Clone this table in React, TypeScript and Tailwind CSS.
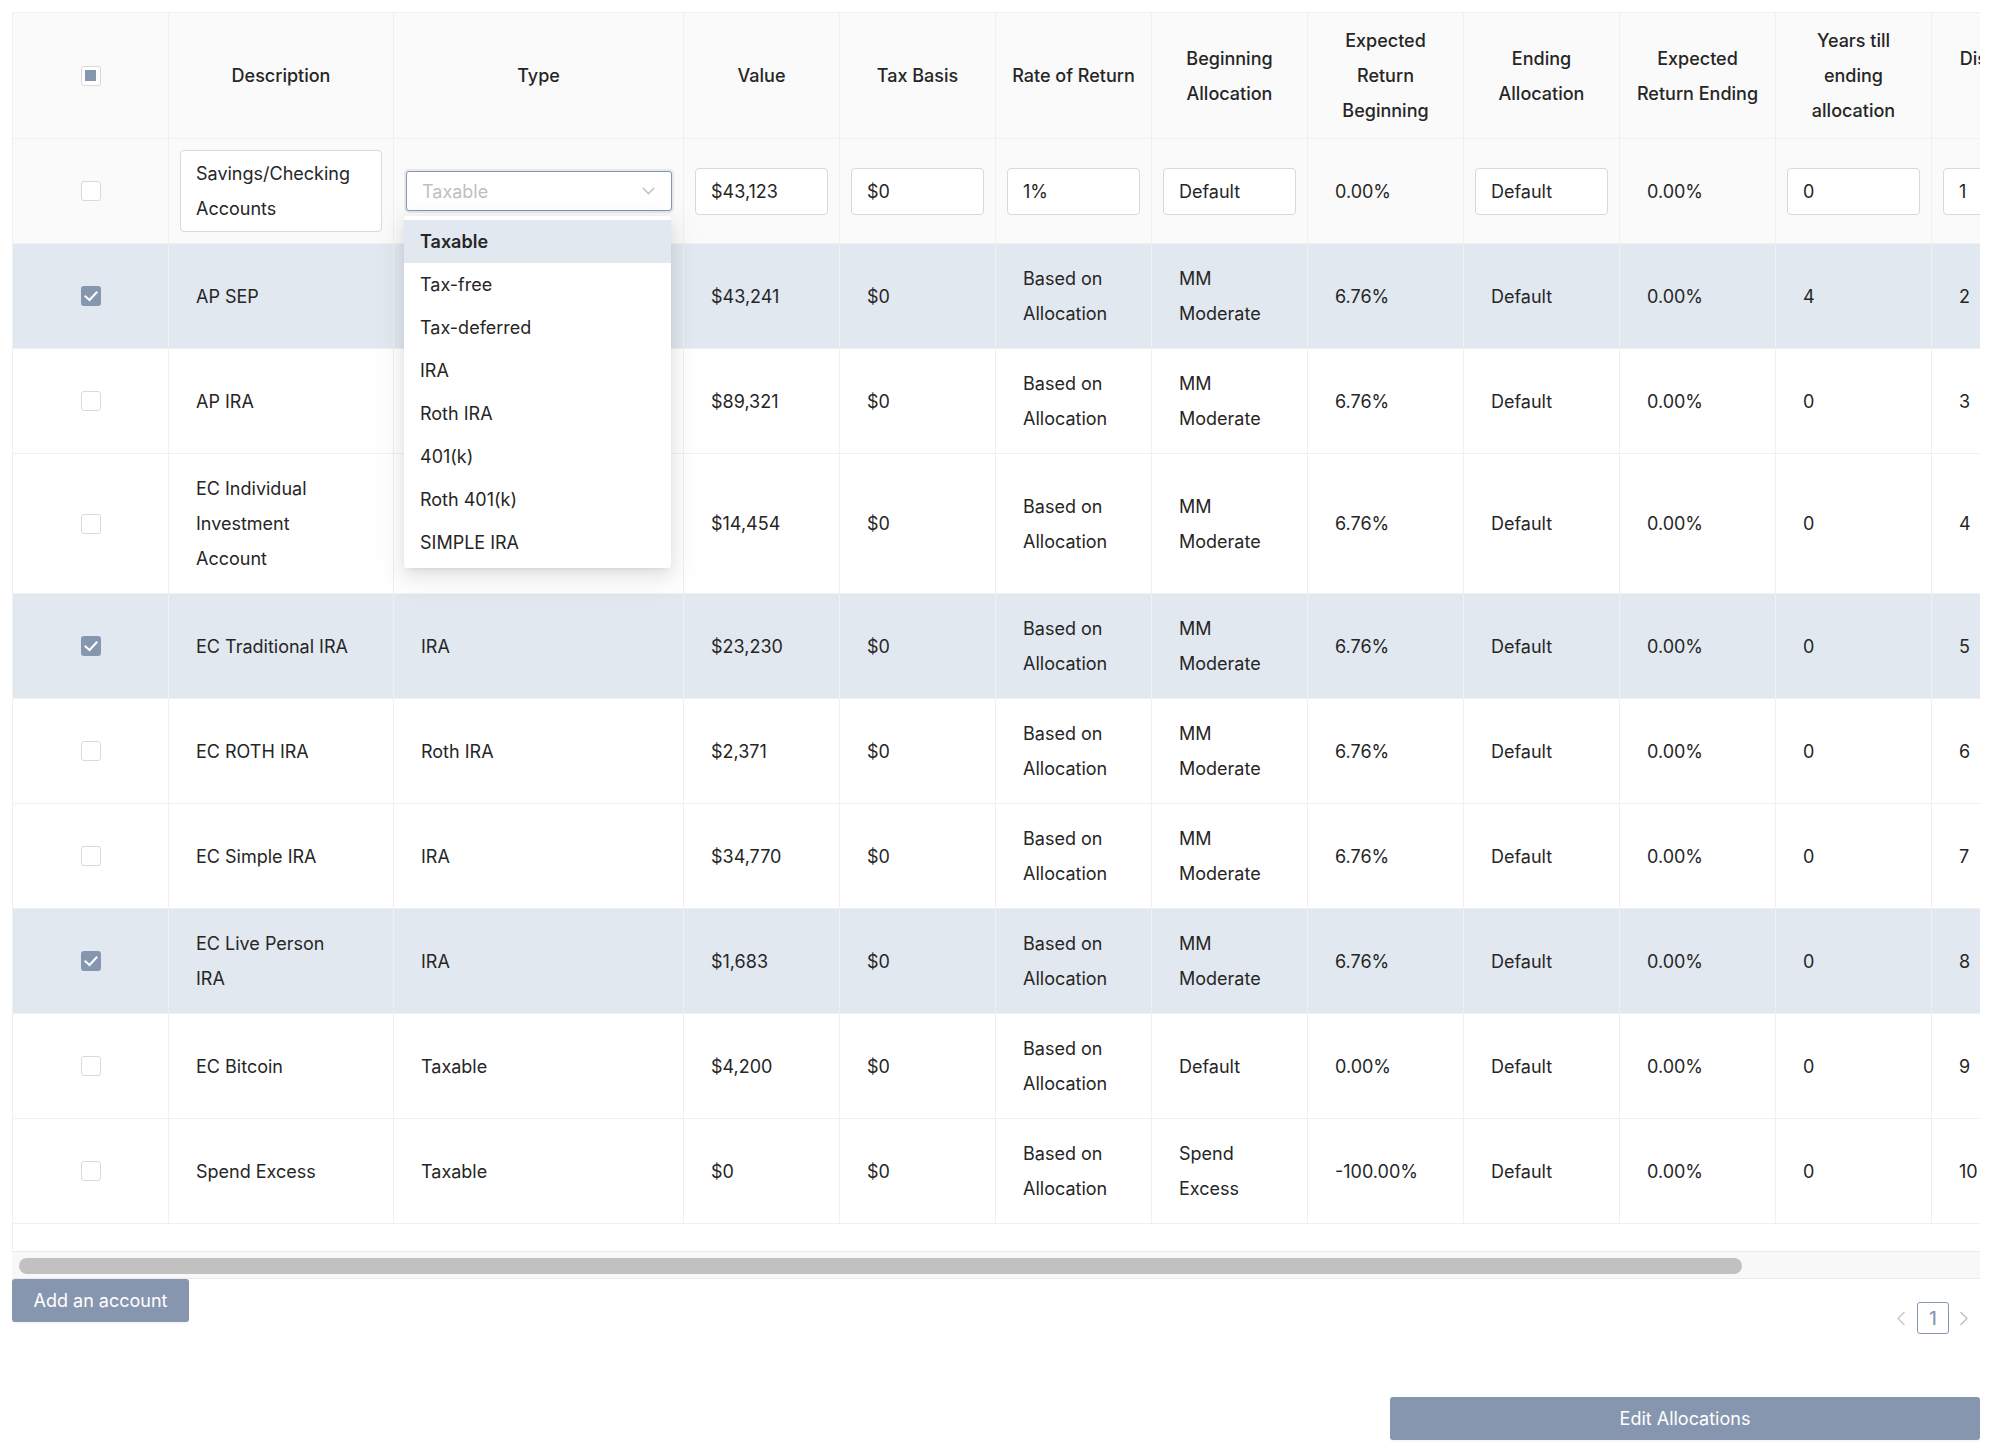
import React from "react";

type Col = { key: string; w: string; title: string[] };

const cols: Col[] = [
  { key: "sel", w: "w-[156px]", title: [] },
  { key: "desc", w: "w-[225px]", title: ["Description"] },
  { key: "type", w: "w-[290px]", title: ["Type"] },
  { key: "value", w: "w-[156px]", title: ["Value"] },
  { key: "basis", w: "w-[156px]", title: ["Tax Basis"] },
  { key: "rate", w: "w-[156px]", title: ["Rate of Return"] },
  { key: "balloc", w: "w-[156px]", title: ["Beginning", "Allocation"] },
  { key: "erb", w: "w-[156px]", title: ["Expected", "Return", "Beginning"] },
  { key: "ealloc", w: "w-[156px]", title: ["Ending", "Allocation"] },
  { key: "ere", w: "w-[156px]", title: ["Expected", "Return Ending"] },
  { key: "years", w: "w-[156px]", title: ["Years till", "ending", "allocation"] },
  { key: "dist", w: "w-[156px]", title: ["Distribution", "Order"] },
  { key: "act", w: "w-[156px]", title: ["Action"] },
];

type Row = {
  sel: boolean;
  desc: string[];
  type: string;
  value: string;
  basis: string;
  rate: string[];
  balloc: string[];
  erb: string;
  ealloc: string;
  ere: string;
  years: string;
  dist: string;
};

const BA = ["Based on", "Allocation"];
const MM = ["MM", "Moderate"];

const rows: Row[] = [
  { sel: true, desc: ["AP SEP"], type: "", value: "$43,241", basis: "$0", rate: BA, balloc: MM, erb: "6.76%", ealloc: "Default", ere: "0.00%", years: "4", dist: "2" },
  { sel: false, desc: ["AP IRA"], type: "", value: "$89,321", basis: "$0", rate: BA, balloc: MM, erb: "6.76%", ealloc: "Default", ere: "0.00%", years: "0", dist: "3" },
  { sel: false, desc: ["EC Individual", "Investment", "Account"], type: "", value: "$14,454", basis: "$0", rate: BA, balloc: MM, erb: "6.76%", ealloc: "Default", ere: "0.00%", years: "0", dist: "4" },
  { sel: true, desc: ["EC Traditional IRA"], type: "IRA", value: "$23,230", basis: "$0", rate: BA, balloc: MM, erb: "6.76%", ealloc: "Default", ere: "0.00%", years: "0", dist: "5" },
  { sel: false, desc: ["EC ROTH IRA"], type: "Roth IRA", value: "$2,371", basis: "$0", rate: BA, balloc: MM, erb: "6.76%", ealloc: "Default", ere: "0.00%", years: "0", dist: "6" },
  { sel: false, desc: ["EC Simple IRA"], type: "IRA", value: "$34,770", basis: "$0", rate: BA, balloc: MM, erb: "6.76%", ealloc: "Default", ere: "0.00%", years: "0", dist: "7" },
  { sel: true, desc: ["EC Live Person", "IRA"], type: "IRA", value: "$1,683", basis: "$0", rate: BA, balloc: MM, erb: "6.76%", ealloc: "Default", ere: "0.00%", years: "0", dist: "8" },
  { sel: false, desc: ["EC Bitcoin"], type: "Taxable", value: "$4,200", basis: "$0", rate: BA, balloc: ["Default"], erb: "0.00%", ealloc: "Default", ere: "0.00%", years: "0", dist: "9" },
  { sel: false, desc: ["Spend Excess"], type: "Taxable", value: "$0", basis: "$0", rate: BA, balloc: ["Spend", "Excess"], erb: "-100.00%", ealloc: "Default", ere: "0.00%", years: "0", dist: "10" },
];

const options = ["Taxable", "Tax-free", "Tax-deferred", "IRA", "Roth IRA", "401(k)", "Roth 401(k)", "SIMPLE IRA"];

function CheckBox({ state }: { state: "checked" | "empty" | "partial" }) {
  if (state === "checked") {
    return (
      <div className="w-5 h-5 rounded-[3px] bg-[#8796af] flex items-center justify-center">
        <svg width="20" height="20" viewBox="0 0 20 20">
          <path d="M4.5 10.5 L8.5 14 L15.5 6.5" stroke="white" strokeWidth="2" fill="none" strokeLinecap="square" />
        </svg>
      </div>
    );
  }
  return (
    <div className="w-5 h-5 rounded-[3px] border border-[#d9d9d9] bg-white flex items-center justify-center">
      {state === "partial" && <div className="w-[11px] h-[11px] bg-[#8796af]" />}
    </div>
  );
}

function Plain({ lines }: { lines: string[] }) {
  return (
    <div className="px-4 py-[6px] whitespace-nowrap min-h-[47px]">
      {lines.map((l, i) => (
        <div key={i}>{l}</div>
      ))}
    </div>
  );
}

function Field({ lines }: { lines: string[] }) {
  return (
    <div className="w-full border border-[#d9d9d9] rounded-[4px] bg-white px-[15px] py-[5px] whitespace-nowrap">
      {lines.map((l, i) => (
        <div key={i}>{l}</div>
      ))}
    </div>
  );
}

const cellBase = "shrink-0 border-r border-[#f0f0f0] px-[11px] py-[11px] flex items-center";

export default function App() {
  return (
    <div className="w-[1990px] h-[1454px] bg-white font-['Inter','Noto_Sans',sans-serif] text-[18px] leading-[35px] text-[#262626] overflow-hidden">
      <div className="pt-[12px] pl-[12px] pr-[10px]">
        <div className="relative">
          <div className="overflow-hidden border-l border-t border-[#f0f0f0]">
            <div className="w-[2231px]">
              {/* header */}
              <div className="flex border-b border-[#f0f0f0] bg-[#fafafa]">
                {cols.map((c) => (
                  <div key={c.key} className={`${c.w} shrink-0 border-r border-[#f0f0f0] px-2 py-[10px] flex items-center justify-center text-center font-medium whitespace-nowrap`}>
                    {c.key === "sel" ? (
                      <CheckBox state="partial" />
                    ) : (
                      <div>
                        {c.title.map((t, i) => (
                          <div key={i}>{t}</div>
                        ))}
                      </div>
                    )}
                  </div>
                ))}
              </div>

              {/* editing row */}
              <div className="flex border-b border-[#f0f0f0] bg-[#fafafa]">
                <div className={`w-[156px] ${cellBase} justify-center`}>
                  <CheckBox state="empty" />
                </div>
                <div className={`w-[225px] ${cellBase}`}>
                  <Field lines={["Savings/Checking", "Accounts"]} />
                </div>
                <div className={`w-[290px] ${cellBase} pl-[12px]`}>
                  <div className="w-full h-[40px] border border-[#8796af] rounded-[3px] bg-white shadow-[0_0_0_2px_rgba(135,150,175,0.18)] pl-[15px] pr-[16px] flex items-center justify-between text-[#bfbfbf]">
                    <span>Taxable</span>
                    <svg width="13" height="8" viewBox="0 0 13 8">
                      <path d="M0.8 0.8 L6.5 6.8 L12.2 0.8" stroke="#bfbfbf" strokeWidth="1.3" fill="none" />
                    </svg>
                  </div>
                </div>
                <div className={`w-[156px] ${cellBase}`}><Field lines={["$43,123"]} /></div>
                <div className={`w-[156px] ${cellBase}`}><Field lines={["$0"]} /></div>
                <div className={`w-[156px] ${cellBase}`}><Field lines={["1%"]} /></div>
                <div className={`w-[156px] ${cellBase}`}><Field lines={["Default"]} /></div>
                <div className={`w-[156px] ${cellBase}`}><Plain lines={["0.00%"]} /></div>
                <div className={`w-[156px] ${cellBase}`}><Field lines={["Default"]} /></div>
                <div className={`w-[156px] ${cellBase}`}><Plain lines={["0.00%"]} /></div>
                <div className={`w-[156px] ${cellBase}`}><Field lines={["0"]} /></div>
                <div className={`w-[156px] ${cellBase}`}><Field lines={["1"]} /></div>
                <div className={`w-[156px] ${cellBase}`}><Plain lines={["Save"]} /></div>
              </div>

              {rows.map((r, idx) => (
                <div key={idx} className={`flex border-b border-[#f0f0f0] ${r.sel ? "bg-[#e2e8f0]" : "bg-white"}`}>
                  <div className={`w-[156px] ${cellBase} justify-center`}>
                    <CheckBox state={r.sel ? "checked" : "empty"} />
                  </div>
                  <div className={`w-[225px] ${cellBase}`}><Plain lines={r.desc} /></div>
                  <div className={`w-[290px] ${cellBase}`}><Plain lines={[r.type]} /></div>
                  <div className={`w-[156px] ${cellBase}`}><Plain lines={[r.value]} /></div>
                  <div className={`w-[156px] ${cellBase}`}><Plain lines={[r.basis]} /></div>
                  <div className={`w-[156px] ${cellBase}`}><Plain lines={r.rate} /></div>
                  <div className={`w-[156px] ${cellBase}`}><Plain lines={r.balloc} /></div>
                  <div className={`w-[156px] ${cellBase}`}><Plain lines={[r.erb]} /></div>
                  <div className={`w-[156px] ${cellBase}`}><Plain lines={[r.ealloc]} /></div>
                  <div className={`w-[156px] ${cellBase}`}><Plain lines={[r.ere]} /></div>
                  <div className={`w-[156px] ${cellBase}`}><Plain lines={[r.years]} /></div>
                  <div className={`w-[156px] ${cellBase}`}><Plain lines={[r.dist]} /></div>
                  <div className={`w-[156px] ${cellBase}`}><Plain lines={["Edit"]} /></div>
                </div>
              ))}
            </div>
          </div>

          {/* empty body remainder */}
          <div className="h-[27px] border-l border-[#f0f0f0]" />

          {/* horizontal scrollbar */}
          <div className="h-[28px] border-y border-[#ebebeb] bg-[#f8f8f8] pt-[6px] pl-[7px]">
            <div className="w-[1723px] h-[16px] rounded-full bg-[#c1c1c1]" />
          </div>

          {/* open select dropdown */}
          <div className="absolute left-[392px] top-[204px] w-[267px] py-1 bg-white rounded-[3px] shadow-[0_3px_6px_-4px_rgba(0,0,0,0.12),0_6px_16px_0_rgba(0,0,0,0.08),0_9px_28px_8px_rgba(0,0,0,0.05)]">
            {options.map((o, i) => (
              <div key={o} className={`px-4 py-[4px] ${i === 0 ? "bg-[#e2e8f0] font-semibold" : ""}`}>
                {o}
              </div>
            ))}
          </div>
        </div>

        <div className="flex justify-between items-start">
          <button className="h-[43px] w-[177px] rounded-[3px] bg-[#8796af] text-white shadow-[0_2px_0_rgba(0,0,0,0.03)] flex items-center justify-center">
            Add an account
          </button>
          <div className="mt-[23px] mr-[4px] flex items-center h-[32px]">
            <div className="w-[32px] h-[32px] flex items-center justify-center">
              <svg width="10" height="15" viewBox="0 0 10 15">
                <path d="M8.5 1 L2 7.5 L8.5 14" stroke="#c4c4c4" strokeWidth="1.3" fill="none" />
              </svg>
            </div>
            <div className="w-[32px] h-[32px] border border-[#8796af] rounded-[3px] flex items-center justify-center text-[#8796af] font-medium">
              1
            </div>
            <div className="ml-[3px] w-[24px] h-[32px] flex items-center justify-center">
              <svg width="10" height="15" viewBox="0 0 10 15">
                <path d="M1.5 1 L8 7.5 L1.5 14" stroke="#bdbdbd" strokeWidth="1.3" fill="none" />
              </svg>
            </div>
          </div>
        </div>

        <div className="flex justify-end mt-[63px]">
          <button className="h-[43px] w-[590px] rounded-[3px] bg-[#8796af] text-white shadow-[0_2px_0_rgba(0,0,0,0.03)] flex items-center justify-center">
            Edit Allocations
          </button>
        </div>
      </div>
    </div>
  );
}
